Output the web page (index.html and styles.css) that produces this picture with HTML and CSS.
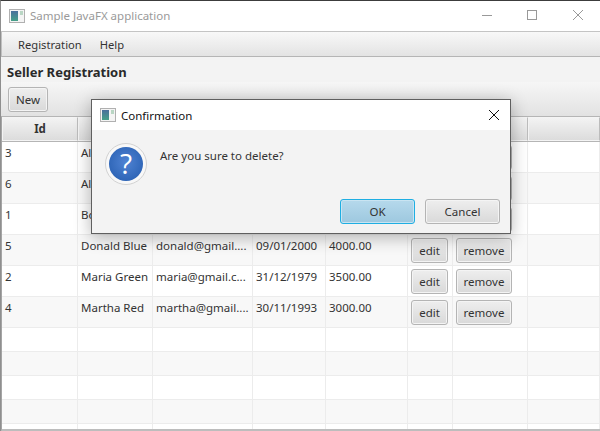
FILE: index.html
```html
<!DOCTYPE html>
<html lang="en">
<head>
<meta charset="utf-8">
<title>Sample JavaFX application</title>
<link rel="stylesheet" href="styles.css">
</head>
<body>
<div class="window">
  <header class="titlebar">
    <svg class="appicon" width="16" height="14" viewBox="0 0 16 14"><rect x=".5" y=".5" width="15" height="13" fill="#f4f4f4" stroke="#b0b0b0"/><defs><linearGradient id="a" x1="0" y1="0" x2="0" y2="1"><stop offset="0" stop-color="#4a6f9c"/><stop offset="1" stop-color="#46a088"/></linearGradient></defs><rect x="2" y="2" width="7" height="10" fill="url(#a)"/><rect x="11" y="2" width="3" height="4" fill="#b9d6c4"/></svg>
    <span class="wintitle">Sample JavaFX application</span>
    <div class="winctl">
      <svg width="45" height="30" viewBox="0 0 45 30"><path d="M17 14.5h10" stroke="#999" fill="none"/></svg>
      <svg width="45" height="30" viewBox="0 0 45 30"><rect x="17.5" y="9.5" width="9" height="9" stroke="#999" fill="none"/></svg>
      <svg width="45" height="30" viewBox="0 0 45 30"><path d="M18 9l10 10M28 9l-10 10" stroke="#999" fill="none"/></svg>
    </div>
  </header>
  <nav class="menubar"><span>Registration</span><span>Help</span></nav>
  <h1 class="heading">Seller Registration</h1>
  <div class="toolbar"><button class="btn new">New</button></div>
  <div class="table">
    <div class="row head"><div>Id</div><div></div><div></div><div></div><div></div><div></div><div></div><div></div></div>
    <div class="row data"><div>3</div><div>Alex Grey</div><div>alex@gmail.com</div><div>21/10/1987</div><div>3000.00</div><div><button class="btn edit">edit</button></div><div><button class="btn remove">remove</button></div><div></div></div>
    <div class="row data alt"><div>6</div><div>Alex Pink</div><div>bob@gmail.com</div><div>11/06/1996</div><div>3000.00</div><div><button class="btn edit">edit</button></div><div><button class="btn remove">remove</button></div><div></div></div>
    <div class="row data"><div>1</div><div>Bob Brown</div><div>bob@gmail.com</div><div>21/04/1998</div><div>1000.00</div><div><button class="btn edit">edit</button></div><div><button class="btn remove">remove</button></div><div></div></div>
    <div class="row data alt"><div>5</div><div>Donald Blue</div><div>donald@gmail....</div><div>09/01/2000</div><div>4000.00</div><div><button class="btn edit">edit</button></div><div><button class="btn remove">remove</button></div><div></div></div>
    <div class="row data"><div>2</div><div>Maria Green</div><div>maria@gmail.c...</div><div>31/12/1979</div><div>3500.00</div><div><button class="btn edit">edit</button></div><div><button class="btn remove">remove</button></div><div></div></div>
    <div class="row data alt"><div>4</div><div>Martha Red</div><div>martha@gmail....</div><div>30/11/1993</div><div>3000.00</div><div><button class="btn edit">edit</button></div><div><button class="btn remove">remove</button></div><div></div></div>
    <div class="row empty"><div></div><div></div><div></div><div></div><div></div><div></div><div></div><div></div></div>
    <div class="row empty alt"><div></div><div></div><div></div><div></div><div></div><div></div><div></div><div></div></div>
    <div class="row empty"><div></div><div></div><div></div><div></div><div></div><div></div><div></div><div></div></div>
    <div class="row empty alt"><div></div><div></div><div></div><div></div><div></div><div></div><div></div><div></div></div>
    <div class="row empty"><div></div><div></div><div></div><div></div><div></div><div></div><div></div><div></div></div>
  </div>
</div>
<div class="dialog">
  <header class="dlgtitle">
    <svg class="appicon" width="16" height="14" viewBox="0 0 16 14"><rect x=".5" y=".5" width="15" height="13" fill="#f4f4f4" stroke="#b0b0b0"/><rect x="2" y="2" width="7" height="10" fill="url(#a)"/><rect x="11" y="2" width="3" height="4" fill="#b9d6c4"/></svg>
    <span>Confirmation</span>
    <svg class="dlgclose" width="12" height="12" viewBox="0 0 12 12"><path d="M1 1l10 10M11 1L1 11" stroke="#111" fill="none"/></svg>
  </header>
  <div class="dlgbody">
    <div class="dlgmsg">
      <svg class="qicon" width="42" height="42" viewBox="0 0 42 42"><defs><radialGradient id="q" cx=".5" cy=".45" r=".6"><stop offset="0" stop-color="#4f83d3"/><stop offset="1" stop-color="#2b62b4"/></radialGradient></defs><circle cx="21" cy="21" r="20.5" fill="#f8f8f8" stroke="#d2d2d2"/><circle cx="21" cy="21" r="17" fill="url(#q)"/></svg>
      <span class="qmark">?</span>
      <p>Are you sure to delete?</p>
    </div>
    <div class="dlgbtns"><button class="btn ok">OK</button><button class="btn cancel">Cancel</button></div>
  </div>
</div>
</body>
</html>
```
FILE: styles.css
```css
* { box-sizing: border-box; }
html, body { margin: 0; height: 431px; overflow: hidden; }
body { position: relative; background: #fff; font-family: "Noto Sans", "Open Sans", sans-serif; font-size: 11.5px; color: #333; }
.window { display: flex; flex-direction: column; height: 431px; border-top: 1px solid #3c3c3c; border-left: 1px solid #8f8f8f; background: #f3f3f3; }
.titlebar { display: flex; align-items: center; height: 31px; flex: none; background: #fff; padding: 0 0 1px 8px; border-bottom: 1px solid #c4c4c4; }
.appicon { flex: none; }
.wintitle { margin-left: 5px; color: #9a9a9a; }
.winctl { margin-left: auto; display: flex; }
.winctl svg { display: block; }
.menubar { display: flex; height: 25px; flex: none; align-items: center; padding-left: 16px; gap: 18px; font-size: 11.2px; background: linear-gradient(#f8f8f8, #e3e3e3); border-bottom: 1px solid #b5b5b5; border-left: 1px solid #c0c0c0; }
.heading { margin: 0; height: 25px; flex: none; padding: 6px 0 0 6px; font-size: 13px; line-height: 18px; font-weight: 700; color: #2a2a2a; }
.toolbar { height: 34px; flex: none; padding: 5px 0 0 7px; background: linear-gradient(#f6f6f6, #e2e2e2); }
.btn { display: inline-block; height: 25px; padding: 0; border: 1px solid #b4b4b4; border-radius: 3px; background: linear-gradient(#eeeeee, #d9d9d9); font: inherit; color: #333; box-shadow: inset 0 0 0 1px #f4f4f4; }
.new { width: 40px; }
.edit { width: 37px; }
.remove { width: 56px; }
.table { flex: 1; margin-left: 0; border-left: 1px solid #a5a5a5; border-top: 1px solid #b5b5b5; background: #fff; overflow: hidden; border-bottom: 2px solid #bdbdbd; }
.row { display: grid; grid-template-columns: 76px 75px 100px 73px 82px 45px 75px 72px; border-bottom: 1px solid #ececec; }
.row > div { border-right: 1px solid #ececec; padding: 3px 3px 0 3px; white-space: nowrap; overflow: hidden; }
.head { height: 25px; border-bottom: 1px solid #b5b5b5; }
.head > div { background: linear-gradient(#f3f3f3, #dcdcdc); border: 1px solid #f4f4f4; border-right: 1px solid #bcbcbc; font-weight: 700; text-align: center; padding-top: 3px; }
.data { height: 31px; }
.data > div:nth-child(n+6) { padding: 3px 0 0 3px; }
.data .btn { vertical-align: top; }
.empty { height: 24px; }
.alt { background: #f8f8f8; }
.dialog { position: absolute; left: 91px; top: 99px; width: 420px; height: 135px; background: #f3f3f3; border: 1px solid #5f5f5f; box-shadow: 0 3px 16px rgba(0,0,0,.3); }
.dlgtitle { display: flex; align-items: center; height: 30px; background: #fff; padding-left: 8px; color: #111; }
.dlgtitle span { margin-left: 5px; }
.dlgclose { margin-left: auto; margin-right: 10px; }
.dlgbody { position: relative; height: 103px; display: flex; flex-direction: column; justify-content: space-between; }
.dlgmsg { display: flex; padding: 13px 0 0 13px; align-items: flex-start; }
.qicon { flex: none; }
.qmark { position: absolute; left: 13px; top: 13px; width: 42px; height: 42px; text-align: center; font-family: "Open Sans", sans-serif; font-weight: 400; font-size: 28px; line-height: 41px; color: #fff; }
.dlgmsg p { margin: 5px 0 0 13px; }
.dlgbtns { display: flex; justify-content: flex-end; gap: 10px; padding: 0 10px 9px 0; }
.ok, .cancel { width: 75px; height: 25px; padding: 0; }
.ok { border-color: #1faee2; background: linear-gradient(#b6d9ec, #9dc8df); box-shadow: inset 0 0 0 1px #c9e4f2; }
```
